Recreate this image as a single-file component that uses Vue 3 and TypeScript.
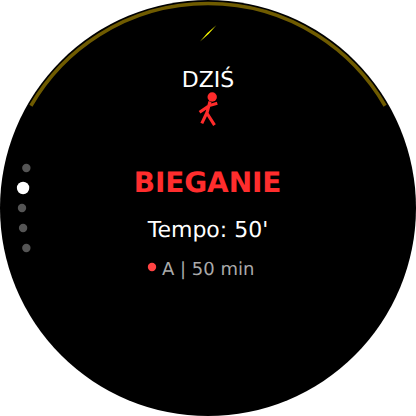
<script setup lang="ts">
interface PageDot {
  x: number
  y: number
  active: boolean
}

const CENTER = 208
const ORBIT = 186
const ACTIVE_PAGE = 1

const dots: PageDot[] = [-40, -20, 0, 20, 40].map((dy, index) => ({
  x: CENTER - Math.sqrt(ORBIT * ORBIT - dy * dy),
  y: CENTER + dy,
  active: index === ACTIVE_PAGE,
}))

const workout = {
  day: 'DZIŚ',
  title: 'BIEGANIE',
  target: "Tempo: 50'",
  details: 'A | 50 min',
}
</script>

<template>
  <main class="watch">
    <svg class="dial" viewBox="0 0 416 416" aria-hidden="true">
      <circle class="face" cx="208" cy="208" r="208" />
      <path class="gauge" d="M30.9 105.75A204.5 204.5 0 0 1 385.1 105.75" />
      <path class="bolt" d="M216.3 25.2L207.4 32.9L200 41.4L208.8 33.7Z" />
      <circle
        v-for="dot in dots"
        :key="dot.y"
        :class="['dot', { active: dot.active }]"
        :cx="dot.x"
        :cy="dot.y"
        :r="dot.active ? 6.2 : 4.2"
      />
    </svg>
    <section class="content">
      <div class="day">{{ workout.day }}</div>
      <svg class="runner" viewBox="196 90 24 38" aria-hidden="true">
        <circle cx="212.2" cy="97" r="4.7" />
        <path d="M210 101.5L206.8 113.5M217.3 103.3L209.2 105.6L199.6 112.2M207 112.5L201.8 123.4M206.5 112.5L214.5 125.2" />
      </svg>
      <h1 class="title">{{ workout.title }}</h1>
      <div class="target">{{ workout.target }}</div>
      <div class="details">
        <svg class="marker" viewBox="0 0 10 10" aria-hidden="true">
          <circle cx="5" cy="5" r="4.2" />
        </svg>
        <span>{{ workout.details }}</span>
      </div>
    </section>
  </main>
</template>

<style>
body {
  background: #fff;
}
</style>

<style scoped>
.watch {
  position: relative;
  width: 416px;
  height: 416px;
  overflow: hidden;
  font-family: "DejaVu Sans", sans-serif;
  text-rendering: geometricPrecision;
}

.dial {
  position: absolute;
  inset: 0;
  width: 416px;
  height: 416px;
}

.face {
  fill: #000;
}

.gauge {
  fill: none;
  stroke: #6f5b00;
  stroke-width: 3.6;
}

.bolt {
  fill: #ffff00;
}

.dot {
  fill: #555;
}

.dot.active {
  fill: #fff;
}

.content {
  position: relative;
  display: flex;
  flex-direction: column;
  align-items: center;
  padding-top: 68px;
  white-space: nowrap;
}

.day {
  height: 22px;
  line-height: 26px;
  font-size: 22px;
  color: #fff;
}

.runner {
  width: 24px;
  height: 38px;
}

.runner circle {
  fill: #ff2b2b;
}

.runner path {
  fill: none;
  stroke: #ff2b2b;
  stroke-width: 3.1;
}

.title {
  margin: 39px 0 0;
  padding-right: 1px;
  line-height: 32px;
  font-size: 28px;
  font-weight: 700;
  letter-spacing: -0.1px;
  color: #ff2d2d;
}

.target {
  margin-top: 19px;
  line-height: 26px;
  font-size: 22px;
  color: #fff;
}

.details {
  display: flex;
  align-items: center;
  gap: 5px;
  margin-top: 15px;
  padding-right: 14.5px;
  line-height: 22px;
  font-size: 18px;
  color: #aaa;
}

.marker {
  width: 10px;
  height: 10px;
  margin-top: -6px;
}

.marker circle {
  fill: #ff4444;
}
</style>
